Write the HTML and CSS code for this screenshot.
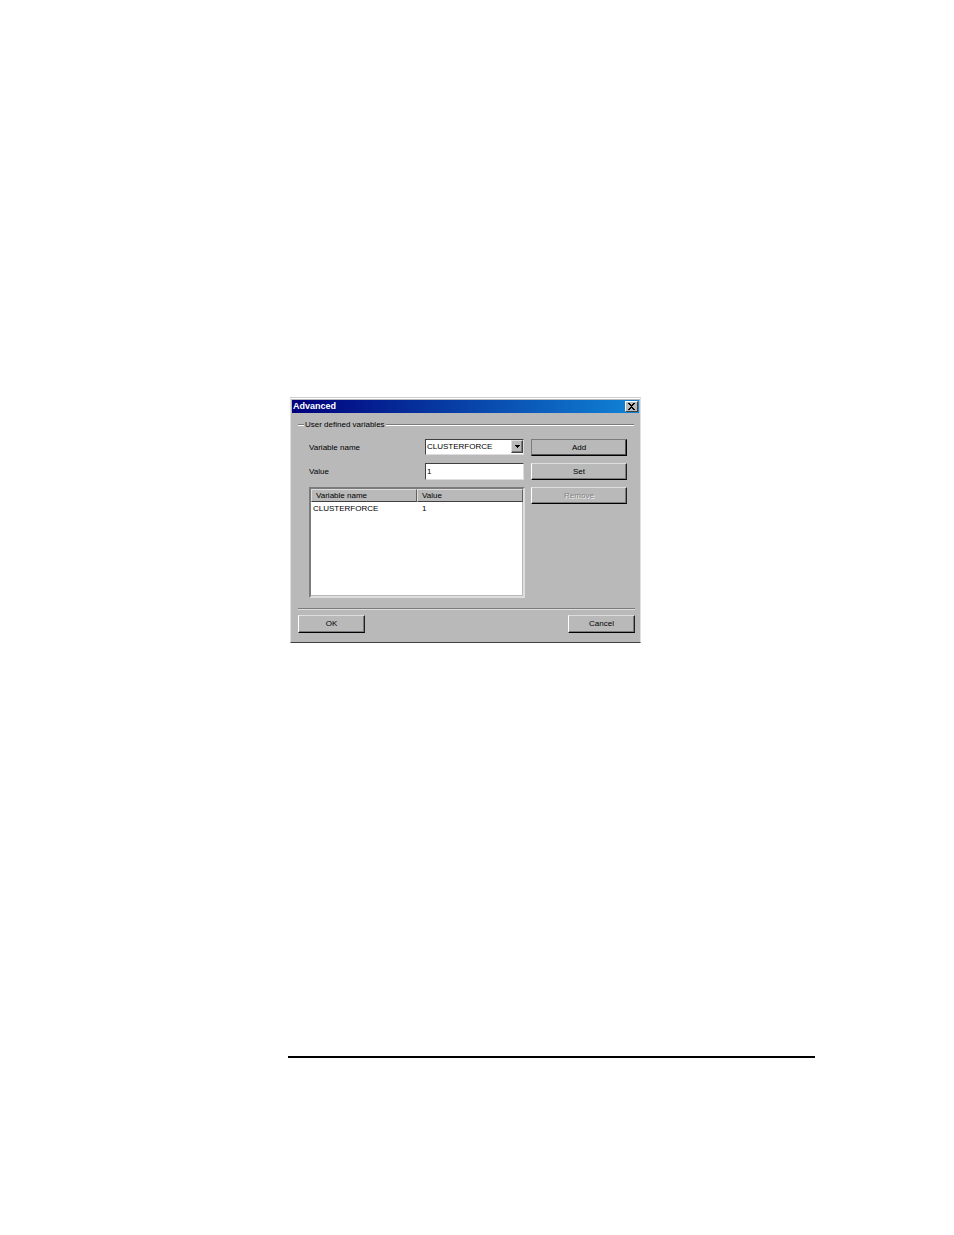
FILE: index.html
```html
<!DOCTYPE html>
<html lang="en">
<head>
<meta charset="utf-8">
<title>Advanced</title>
<link rel="stylesheet" href="styles.css">
</head>
<body>
<main class="page">
  <form class="dialog">
    <header class="titlebar">
      <h1 class="title">Advanced</h1>
      <button class="close" type="button" aria-label="Close">
        <svg width="7" height="7" viewBox="0 0 7 7" aria-hidden="true"><path d="M0 0h2v1h1v1h1V1h1V0h2v1H6v1H5v1H4v1h1v1h1v1h1v1H5V6H4V5H3v1H2v1H0V6h1V5h1V4h1V3H2V2H1V1H0z"/></svg>
      </button>
    </header>
    <section class="group" aria-labelledby="group-title">
      <div class="group-head"><h2 class="group-title" id="group-title">User defined variables</h2></div>
      <div class="fields">
        <label class="label" for="name">Variable name</label>
        <span class="combo">
          <select class="field select" id="name"><option>CLUSTERFORCE</option></select>
          <span class="drop"><svg width="5" height="3" viewBox="0 0 5 3" aria-hidden="true"><path d="M0 0h5v1H4v1H3v1H2V2H1V1H0z"/></svg></span>
        </span>
        <button class="button default" type="button">Add</button>
        <label class="label" for="value">Value</label>
        <input class="field" id="value" type="text" value="1">
        <button class="button" type="button">Set</button>
        <div class="list">
          <table class="table">
            <thead><tr><th class="name-col">Variable name</th><th>Value</th></tr></thead>
            <tbody><tr><td>CLUSTERFORCE</td><td>1</td></tr></tbody>
          </table>
        </div>
        <button class="button" type="button" disabled>Remove</button>
      </div>
    </section>
    <footer class="actions">
      <button class="button action" type="submit">OK</button>
      <button class="button action" type="button">Cancel</button>
    </footer>
  </form>
  <hr class="rule">
</main>
</body>
</html>
```
FILE: styles.css
```css
* { box-sizing: border-box; }

body {
  margin: 0;
  background: #fff;
  color: #000;
  font: 8px/12px "Liberation Sans", Arial, sans-serif;
}

.page { padding: 397px 139px 177px 288px; }

.dialog {
  max-width: 351px;
  margin-left: 2px;
  padding: 1px 1px 9px;
  background: #b9b9b9;
  border: 1px solid #e0e0e0;
  border-top-color: #cfcfcf;
  border-bottom-color: #404040;
  box-shadow: inset 0 1px #fff;
}

.titlebar {
  display: flex;
  align-items: center;
  justify-content: space-between;
  height: 13px;
  margin-top: 1px;
  padding: 0 1px;
  background: linear-gradient(90deg, #00007b, #1084d6);
}

.title {
  margin: 0;
  color: #fff;
  font-size: 9px;
  font-weight: bold;
  line-height: 13px;
}

button { font: inherit; color: inherit; }

.close {
  display: grid;
  place-items: center;
  width: 13px;
  height: 11px;
  padding: 0;
  background: #b9b9b9;
  border: 1px solid;
  border-color: #fff #404040 #404040 #fff;
}

.group { padding: 6px 5px 10px 6px; }

.group-head {
  display: flex;
  align-items: center;
  gap: 1px;
  height: 12px;
}

.group-head::before,
.group-head::after {
  content: "";
  height: 2px;
  background: linear-gradient(#7b7b7b 50%, #fff 50%);
}

.group-head::before { width: 6px; }
.group-head::after { flex: 1; }

.group-title { margin: 0; font: inherit; }

.fields {
  display: grid;
  grid-template-columns: 116px minmax(0, 1fr) 96px;
  row-gap: 7px;
  align-items: start;
  padding: 8px 7px 0 11px;
}

.label { line-height: 17px; }

.combo { position: relative; display: block; margin-right: 7px; }

.field {
  display: block;
  width: calc(100% - 7px);
  height: 17px;
  margin: 0;
  padding: 0 1px 1px;
  color: #000;
  background: #fff;
  border: 1px solid;
  border-color: #404040 #dedede #dedede #404040;
  border-radius: 0;
  font: inherit;
  outline: 0;
}

.select { appearance: none; width: 100%; height: 16px; }

.drop {
  position: absolute;
  top: 1px;
  right: 1px;
  display: grid;
  place-items: center;
  width: 12px;
  height: 13px;
  background: #b9b9b9;
  border: 1px solid;
  border-color: #dedede #404040 #404040 #dedede;
  box-shadow: inset -1px -1px #7b7b7b;
  pointer-events: none;
}

.button {
  height: 17px;
  padding: 0;
  line-height: 12px;
  text-align: center;
  background: #b9b9b9;
  border: 1px solid;
  border-color: #dedede #202020 #000 #fff;
  box-shadow: inset -1px -1px #7b7b7b;
}

.default {
  border-color: #7b7b7b #000 #000 #7b7b7b;
  box-shadow: inset -1px -1px #555;
}

.button:disabled { color: #858585; text-shadow: 1px 1px #efefef; }

.list {
  grid-column: 1 / 3;
  min-height: 111px;
  margin-right: 6px;
  background: #fff;
  border: 2px solid;
  border-color: #7b7b7b #dedede #dedede #7b7b7b;
  box-shadow: inset -1px -1px #b9b9b9;
}

.table { width: 100%; border-collapse: separate; border-spacing: 0; table-layout: fixed; }

.name-col { width: 106px; }

.table th {
  height: 13px;
  padding: 0 4px;
  text-align: left;
  font-weight: normal;
  line-height: 11px;
  background: #b9b9b9;
  border: 1px solid;
  border-color: #dedede #606060 #404040 #dedede;
}

.table td { padding: 0 5px; line-height: 14px; }
.table td:first-child { padding-left: 2px; }

.actions {
  display: flex;
  justify-content: space-between;
  margin: 0 4px 0 6px;
  padding-top: 6px;
  border-top: 1px solid #7b7b7b;
  box-shadow: inset 0 1px #dedede;
}

.action { width: 67px; height: 18px; }

.rule { height: 2px; margin: 413px 0 0; background: #000; border: 0; }
```
